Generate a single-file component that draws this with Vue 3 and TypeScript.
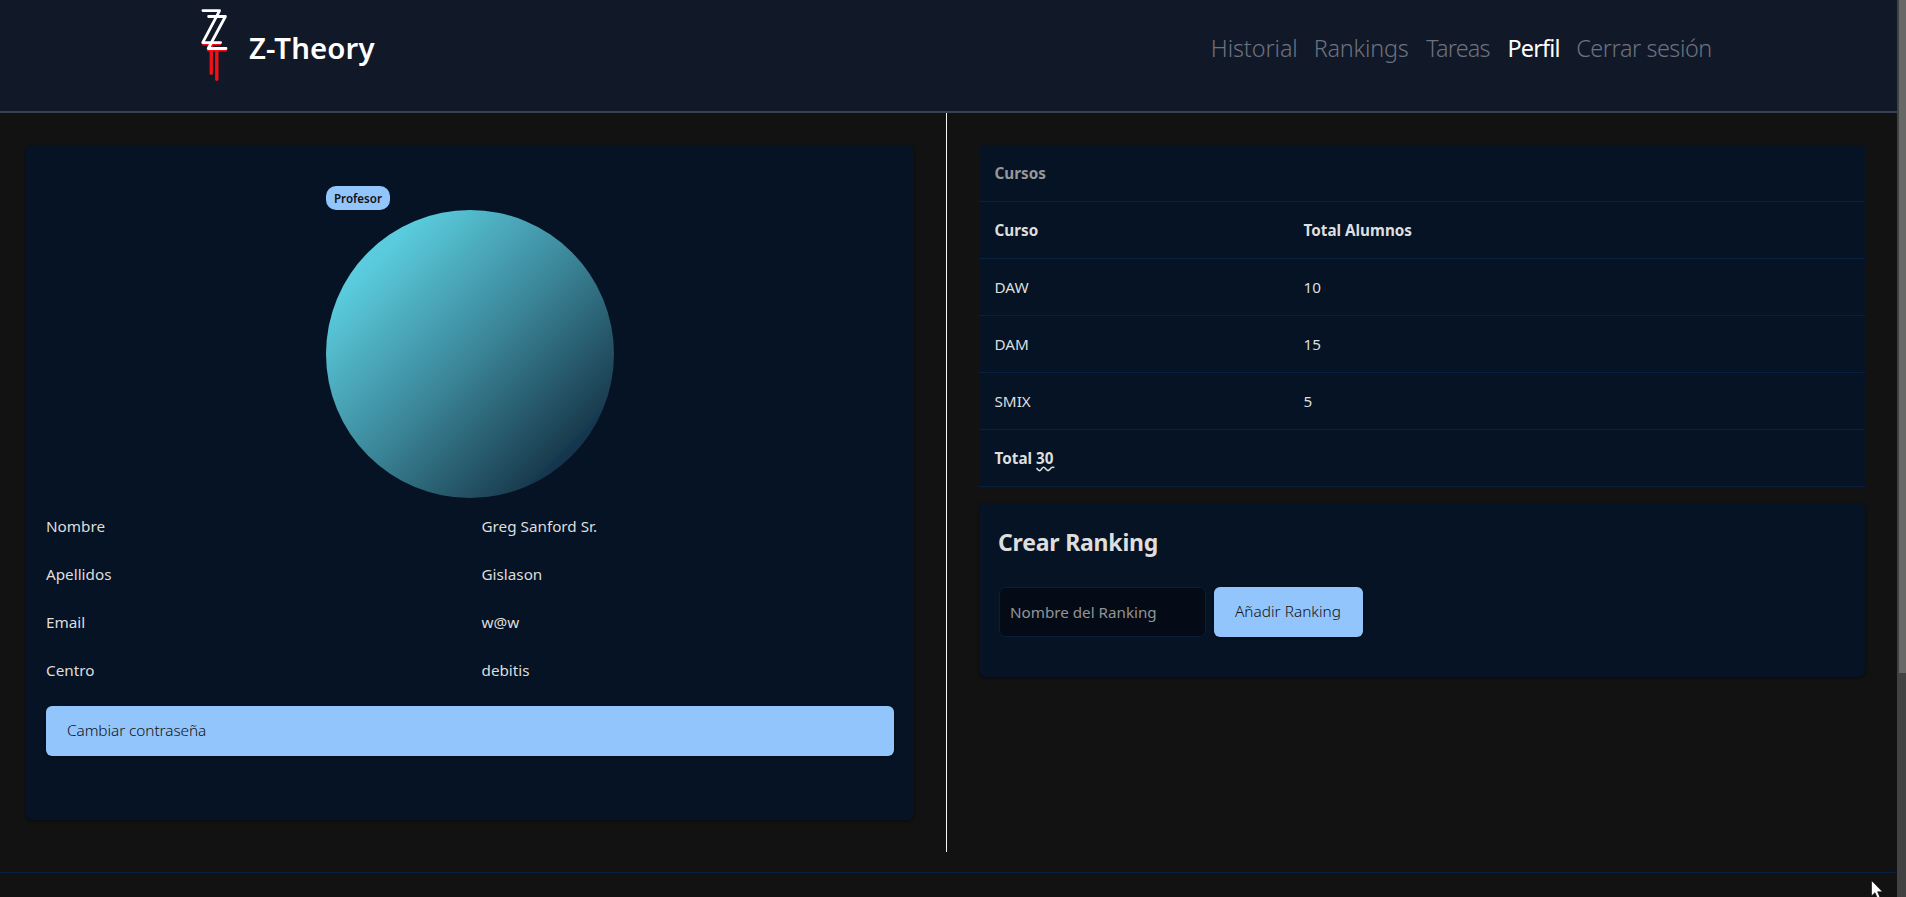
<script setup lang="ts">
import { computed, ref } from 'vue'

interface NavLink { id: string; label: string; active?: boolean }
interface Field { label: string; value: string }
interface Course { name: string; students: number }

const links: NavLink[] = [
  { id: 'historial', label: 'Historial' },
  { id: 'rankings', label: 'Rankings' },
  { id: 'tareas', label: 'Tareas' },
  { id: 'perfil', label: 'Perfil', active: true },
  { id: 'salir', label: 'Cerrar sesión' },
]

const fields: Field[] = [
  { label: 'Nombre', value: 'Greg Sanford Sr.' },
  { label: 'Apellidos', value: 'Gislason' },
  { label: 'Email', value: 'w@w' },
  { label: 'Centro', value: 'debitis' },
]

const courses: Course[] = [
  { name: 'DAW', students: 10 },
  { name: 'DAM', students: 15 },
  { name: 'SMIX', students: 5 },
]

const total = computed(() => courses.reduce((sum, c) => sum + c.students, 0))
const rankingName = ref('')
</script>

<template>
  <div class="window">
    <div class="page">
      <header class="navbar">
        <div class="brand">
          <svg class="logo" viewBox="0 0 36 80" fill="none">
            <g stroke="#ee1218" stroke-linecap="round">
              <path d="M7 40.4H24" stroke-width="2" />
              <path d="M12 46.4H30" stroke-width="2" />
              <path d="M15.3 41V69.2" stroke-width="3.4" />
              <path d="M20.8 47V75.2" stroke-width="3.4" />
            </g>
            <g stroke="#fff" stroke-width="2.8" stroke-linecap="round" stroke-linejoin="round">
              <path d="M6.9 6.6H23.6L6.7 38.6H24.6" />
              <path d="M12.6 12.5H29.4L12.2 44.5H30" />
            </g>
          </svg>
          <span class="brand-name">Z-Theory</span>
        </div>
        <nav class="links">
          <a v-for="l in links" :key="l.id" :class="['link', l.id, { active: l.active }]">{{ l.label }}</a>
        </nav>
      </header>

      <main class="columns">
        <section class="left">
          <div class="card profile">
            <div class="picture">
              <span class="badge">Profesor</span>
              <div class="avatar"></div>
            </div>
            <dl class="fields">
              <div v-for="f in fields" :key="f.label" class="field">
                <dt>{{ f.label }}</dt>
                <dd>{{ f.value }}</dd>
              </div>
            </dl>
            <button class="btn wide">Cambiar contraseña</button>
          </div>
        </section>

        <section class="right">
          <div class="table">
            <div class="row caption"><span>Cursos</span></div>
            <div class="row head"><span>Curso</span><span>Total Alumnos</span></div>
            <div v-for="c in courses" :key="c.name" class="row">
              <span>{{ c.name }}</span><span>{{ c.students }}</span>
            </div>
            <div class="row foot">
              <span>Total <span class="sum">{{ total }}<svg class="wave" viewBox="0 0 19 6" fill="none"><path d="M.5 2.2C2 3.4 2.4 4.8 3.8 4.6C5.4 4.4 6 1.2 7.6 1.2C9.4 1.2 10 4.6 12 4.6C14 4.6 14.6 1.4 16.4 1.2Q17.4 1.1 18.4 1.4" stroke="#dcdcdc" stroke-width="1.6" /></svg></span></span>
            </div>
          </div>

          <div class="card ranking">
            <h2>Crear Ranking</h2>
            <form class="form" @submit.prevent>
              <input v-model="rankingName" placeholder="Nombre del Ranking" />
              <button class="btn add">Añadir Ranking</button>
            </form>
          </div>
        </section>
      </main>
      <hr />
      <svg class="cursor" viewBox="0 0 12 19"><path d="M.5 .5V16L4 12.7L6.5 18.4L9 17.4L6.6 11.8H11.5Z" fill="#fff" stroke="#000" stroke-width=".6" /></svg>
    </div>
    <div class="scrollbar"><div class="thumb"></div></div>
  </div>
</template>

<style>
html, body { background: #121212; }
</style>

<style scoped>
.window {
  display: flex;
  height: 897px;
  overflow: hidden;
  background: #121212;
  color: #dedede;
  font-family: "Noto Sans", "Open Sans", sans-serif;
  font-size: 15.25px;
  font-variant-ligatures: none;
}
.window * { box-sizing: border-box; }
.page { position: relative; width: 1897px; flex: none; }
.navbar {
  display: flex;
  justify-content: space-between;
  height: 113px;
  padding: 4px 173px 0 196px;
  background: #111827;
  border-bottom: 2px solid #374151;
}
.brand { display: flex; height: 88px; align-items: center; color: #fff; }
.logo { width: 36px; height: 80px; align-self: flex-start; }
.brand-name { margin-left: 17px; font-size: 29.4px; font-weight: 600; line-height: 40px; letter-spacing: .1px; white-space: nowrap; }
.links { display: flex; width: 513px; height: 88px; align-items: center; }
.link { flex: none; margin-left: -.2px; color: #6b7280; font-size: 23.4px; font-weight: 350; line-height: 32px; white-space: nowrap; }
.historial { width: 103px; letter-spacing: -.1px; }
.rankings { width: 112.8px; letter-spacing: -.2px; }
.tareas { width: 81.4px; letter-spacing: -.8px; }
.perfil { width: 69px; letter-spacing: -.8px; }
.salir { letter-spacing: -.45px; }
.active { color: #fff; font-weight: 400; }

.columns { display: flex; height: 739px; }
.left { width: 947px; padding: 32px 32px 32px 26px; border-right: 1px solid #f4f4f4; }
.right { display: flex; flex-direction: column; gap: 16px; width: 950px; padding: 32px 32px 0; }
.card { background: #051324; border-radius: 6px; box-shadow: 0 1px 3px rgba(0, 0, 0, .5); }
.profile { height: 675px; padding: 41px 20px 0; }
.picture { width: 288px; margin: 0 auto 4px; }
.badge {
  display: block;
  width: 64px;
  height: 24px;
  border-radius: 10px;
  background: #93c5fd;
  color: #121212;
  font-size: 11.6px;
  font-weight: 600;
  line-height: 25px;
  text-align: center;
}
.avatar {
  width: 288px;
  height: 288px;
  border-radius: 50%;
  background: linear-gradient(135deg, #62d9e9 0%, #59cadb 18%, #3c879a 50%, #1b4052 81%, #14364e 84%, #102c48 100%);
}
.fields { margin: 0; }
.field { display: grid; grid-template-columns: 435.5px 1fr; height: 48px; line-height: 48px; }
dt, dd { margin: 0; }
.btn {
  display: block;
  height: 50px;
  padding: 0 0 0 21px;
  border: 0;
  border-radius: 6px;
  background: #93c5fd;
  color: #121212;
  font: 350 15.4px/50px "Noto Sans", "Open Sans", sans-serif;
  text-align: left;
  white-space: nowrap;
  box-shadow: 0 1px 3px rgba(0, 0, 0, .5);
}
.wide { width: 100%; margin-top: 12px; letter-spacing: -.08px; }
.add { width: 149px; }

.table { background: #051324; }
.row { display: grid; grid-template-columns: 309px 1fr; height: 57px; padding-left: 15.5px; border-bottom: 1px solid #081f3d; line-height: 56px; }
.caption, .head, .foot { font-weight: 700; }
.caption { color: #969899; line-height: 57px; }
.sum { position: relative; }
.wave { position: absolute; left: 0; top: 18px; width: 19px; height: 6px; }

.ranking { height: 174px; padding: 16px 20px; }
h2 { margin: 0 0 20px -1px; height: 48px; font-size: 23px; font-weight: 700; line-height: 46px; letter-spacing: -.2px; }
.form { display: flex; gap: 8px; }
input {
  width: 207px;
  height: 50px;
  padding: 0 10px;
  border: 1px solid #0a1e38;
  border-radius: 6px;
  outline: 0;
  background: #040b17;
  color: #dedede;
  font: 15.2px "Noto Sans", "Open Sans", sans-serif;
}
input::placeholder { color: #929496; opacity: 1; }
hr { height: 1px; margin: 20px 0 0; border: 0; background: #06203f; }
.cursor { position: absolute; left: 1870.5px; top: 880px; width: 12px; height: 19px; }

.scrollbar { width: 9px; background: #424242; }
.thumb { width: 7px; height: 673px; margin-left: 2px; background: #686866; }
</style>
